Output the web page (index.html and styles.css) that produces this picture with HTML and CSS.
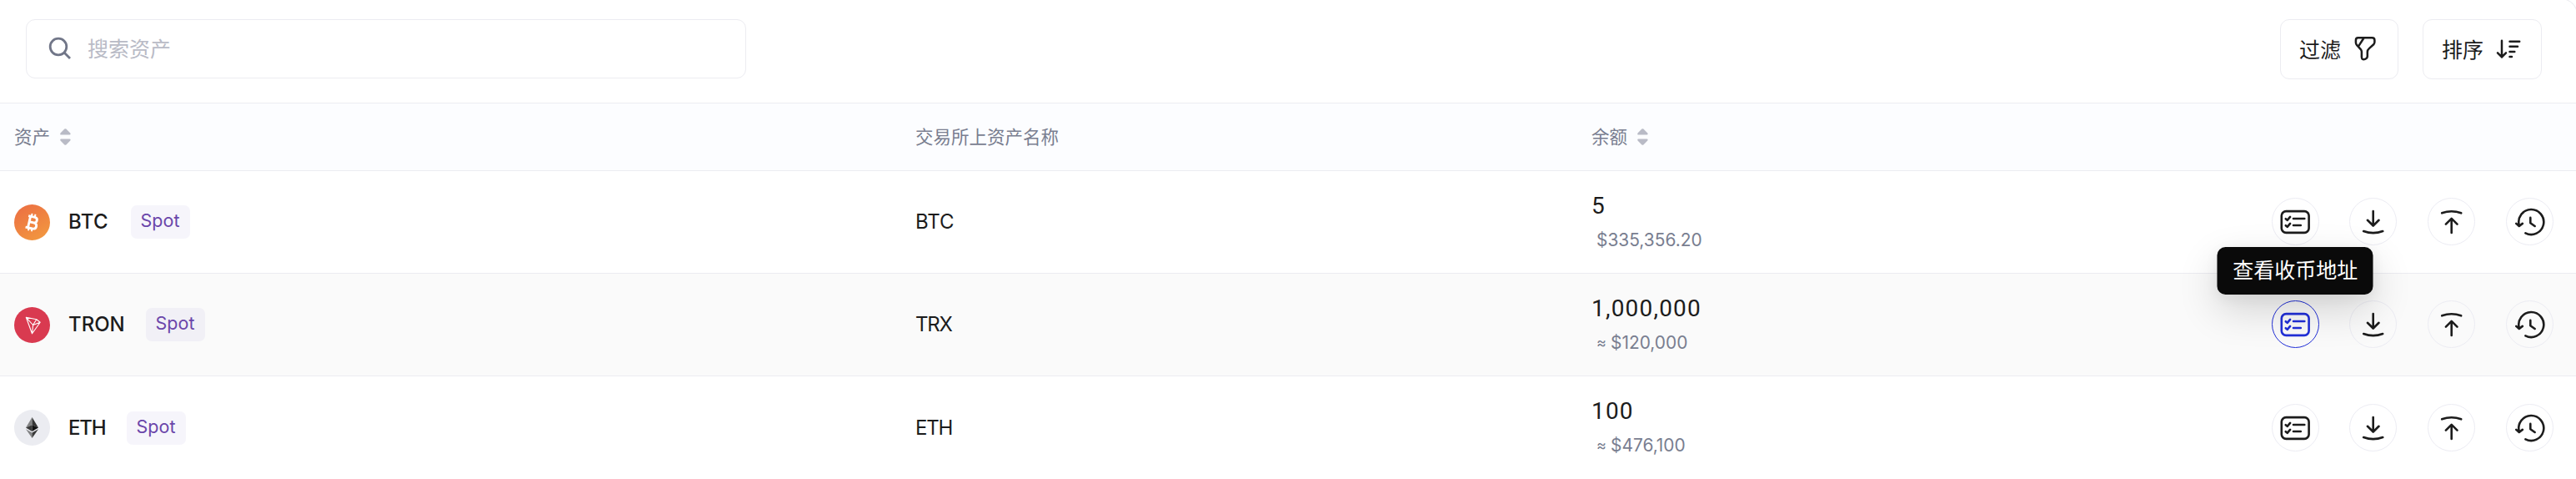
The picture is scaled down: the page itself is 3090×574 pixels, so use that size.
FILE: index.html
```
<!DOCTYPE html>
<html lang="zh-CN">
<head>
<meta charset="utf-8">
<title>资产</title>
<link rel="stylesheet" href="styles.css">
</head>
<body>
<svg class="defs" width="0" height="0" aria-hidden="true">
  <symbol id="i-card" viewBox="0 0 57 57"><rect x="11.8" y="16.1" width="32.8" height="25.8" rx="5.5"/><path d="M16.8 25.2l1.900 1.700 3.400-4M16.8 33.2l1.900 1.700 3.400-4M26 25h13.300M26 33h8.800"/></symbol>
  <symbol id="i-down" viewBox="0 0 57 57"><path d="M28.7 16v17M21.9 26.8l6.8 6.7 6.8-6.7M17.2 40q11.5 4.2 23 0"/></symbol>
  <symbol id="i-up" viewBox="0 0 57 57"><path d="M28.7 42V25M21.9 31.6l6.8-6.7 6.8 6.7M17.2 18.3q11.5-4.2 23 0"/></symbol>
  <symbol id="i-history" viewBox="0 0 57 57"><path d="M15.8 33A15 15 0 1 1 23.4 42.4M12.3 30.9l3.5 3.1 4-3.1M29.3 23.9v6.3l5.3 3.8"/></symbol>
  <symbol id="i-sorter" viewBox="0 0 13 20"><path d="M5.4.6Q6.4-.3 7.4.6L12.3 5.600Q13.200 7.500 11.500 7.500H1.300Q-.3 7.500.5 5.600ZM5.400 19.400Q6.400 20.300 7.400 19.400L12.300 14.400Q13.200 12.500 11.500 12.500H1.300Q-.3 12.500.5 14.400Z"/></symbol>
</svg>
<main class="panel">
  <div class="toolbar">
    <label class="search">
      <svg class="search-icon" viewBox="0 0 32 32"><circle cx="13" cy="13" r="9.800"/><path d="M20.500 20.500l6.500 6.500"/></svg>
      <span>搜索资产</span>
    </label>
    <div class="tools">
      <button class="tool"><span>过滤</span><svg class="tool-icon filter" viewBox="0 0 30 34"><path d="M6.500 3.300H23.500Q26.400 3.300 26.400 6.200V8.200Q26.400 10 25.200 11.300L19.800 16.100Q17.800 17.800 17.800 20.200V25.500Q17.800 27 16.500 28L14.900 28.900Q11.200 30.300 10.900 26.500V20Q10.900 18.500 9.500 16.800L5.200 12.200Q3.900 10.800 3.900 9V6.200Q3.900 3.300 6.500 3.300ZM13.500 3.500L7.600 12.600"/></svg></button>
      <button class="tool"><span>排序</span><svg class="tool-icon" viewBox="0 0 32 34"><path d="M8 6.700V26.500M3 21.400l5 5 5-5M17.500 7.700H29.200M17.500 13.700H27M17.500 19.900H23.300M17.500 26H20"/></svg></button>
    </div>
  </div>
  <div class="table">
    <div class="row head">
      <div class="cell"><span>资产</span><svg class="sorter"><use href="#i-sorter"/></svg></div>
      <div class="cell"><span>交易所上资产名称</span></div>
      <div class="cell"><span>余额</span><svg class="sorter"><use href="#i-sorter"/></svg></div>
    </div>
    <div class="row">
      <div class="cell">
        <svg class="coin" viewBox="0 0 43 43"><defs><linearGradient id="btc" x1=".2" y1="0" x2=".8" y2="1"><stop stop-color="#ec7043"/><stop offset="1" stop-color="#f2983f"/></linearGradient></defs><circle cx="21.500" cy="21.500" r="21.500" fill="url(#btc)"/><g transform="translate(21 21.500) rotate(13)" fill="none" stroke="#fff" stroke-width="2.900"><path d="M-5.500-6.900H2.300Q5.600-6.900 5.600-3.600T2.300-.2H-2.500M2.300-.2Q6.500 0 6.500 3.500T2.500 7.100H-6M-3-6.900V7.100"/><path stroke-width="2" d="M-1.800-10.500V-7M2.200-10.500V-7M-1.800 7V10.500M2.200 7V10.500"/></g></svg>
        <span class="name btc">BTC</span><span class="badge">Spot</span>
      </div>
      <div class="cell symbol">BTC</div>
      <div class="cell balance"><span class="amount">5</span><span class="value">$335,356.20</span></div>
      <div class="actions">
        <button class="act"><svg><use href="#i-card"/></svg></button>
        <button class="act"><svg><use href="#i-down"/></svg></button>
        <button class="act"><svg><use href="#i-up"/></svg></button>
        <button class="act"><svg><use href="#i-history"/></svg></button>
      </div>
    </div>
    <div class="row hovered">
      <div class="cell">
        <svg class="coin" viewBox="0 0 43 43"><circle cx="21.500" cy="21.500" r="21.500" fill="#d93a50"/><path d="M14.300 12.300L26.800 14.800 31.200 18.200 21.500 31.800ZM14.300 12.300L22.600 21.500 21.500 31.800M22.600 21.500L31.200 18.200M22.600 21.500L26.800 14.800" fill="none" stroke="#fff" stroke-width="1.100" stroke-linejoin="round"/></svg>
        <span class="name tron">TRON</span><span class="badge">Spot</span>
      </div>
      <div class="cell symbol tight">TRX</div>
      <div class="cell balance"><span class="amount">1,000,000</span><span class="value"><i class="approx">≈</i>$120,000</span></div>
      <div class="actions">
        <button class="act active"><svg><use href="#i-card"/></svg><span class="tooltip">查看收币地址</span></button>
        <button class="act"><svg><use href="#i-down"/></svg></button>
        <button class="act"><svg><use href="#i-up"/></svg></button>
        <button class="act"><svg><use href="#i-history"/></svg></button>
      </div>
    </div>
    <div class="row">
      <div class="cell">
        <svg class="coin" viewBox="0 0 43 43"><circle cx="21.500" cy="21.500" r="21.500" fill="#ebecf1"/><path d="M21.500 9L14 21.500 21.500 18.200Z" fill="#828384"/><path d="M21.500 9L29 21.500 21.500 18.200Z" fill="#343434"/><path d="M14 21.500L21.500 18.200V26Z" fill="#393939"/><path d="M29 21.500L21.500 18.200V26Z" fill="#111"/><path d="M14 23.200L21.500 27.600V34Z" fill="#828384"/><path d="M29 23.200L21.500 27.600V34Z" fill="#393939"/></svg>
        <span class="name eth">ETH</span><span class="badge">Spot</span>
      </div>
      <div class="cell symbol tight">ETH</div>
      <div class="cell balance"><span class="amount">100</span><span class="value"><i class="approx">≈</i>$476,100</span></div>
      <div class="actions">
        <button class="act"><svg><use href="#i-card"/></svg></button>
        <button class="act"><svg><use href="#i-down"/></svg></button>
        <button class="act"><svg><use href="#i-up"/></svg></button>
        <button class="act"><svg><use href="#i-history"/></svg></button>
      </div>
    </div>
  </div>
</main>
</body>
</html>
```
FILE: styles.css
```
* { box-sizing: border-box; }
body { margin: 0; background: #fff; color: #1c1c1c; font-family: Inter, "Noto Sans CJK SC", sans-serif; }
button { margin: 0; padding: 0; background: none; font: inherit; color: inherit; }
svg { display: block; flex: none; }
.defs { position: absolute; }

.panel { position: relative; width: 3090px; height: 574px; overflow: hidden; }
.panel::after { content: ""; position: absolute; top: -2px; right: -2px; width: 20px; height: 20px; border: solid #ececf1; border-width: 1px 1px 0 0; border-top-right-radius: 20px; }

.toolbar { display: flex; justify-content: space-between; align-items: flex-start; height: 123px; padding: 23px 41px 0 31px; font-family: "Noto Sans CJK SC", sans-serif; font-size: 25px; line-height: 36px; }
.toolbar span { padding-bottom: 3px; }
.search { display: flex; align-items: center; width: 864px; height: 71px; padding: 0 25px; border: 1px solid #ececf1; border-radius: 11px; color: #b9bbc6; gap: 16px; }
.search-icon { width: 32px; height: 32px; fill: none; stroke: #717688; stroke-width: 2.8; }
.tools { display: flex; gap: 29px; }
.tool { display: flex; align-items: center; justify-content: space-between; width: 142px; height: 72px; padding: 0 24px 0 22px; border: 1px solid #ececf1; border-radius: 11px; }
.tool:last-child { width: 143px; padding-right: 23px; }
.tool-icon { width: 32px; height: 34px; fill: none; stroke: #1c1c1c; stroke-width: 2.5; stroke-linecap: round; stroke-linejoin: round; }
.tool-icon.filter { width: 30px; }

.row { display: grid; grid-template-columns: 1081px 811px 700px 1fr; height: 123px; border-bottom: 1px solid #ececf1; }
.row:last-child { border-bottom: 0; }
.head { height: 82px; border-top: 1px solid #ececf1; background: #fcfdff; color: #797e90; font-family: "Noto Sans CJK SC", sans-serif; font-size: 21.5px; }
.head span { padding-bottom: 3px; }
.hovered { background: #fafafa; }
.cell { display: flex; align-items: center; padding-left: 17px; }
.sorter { width: 13px; height: 20px; margin-left: 12px; fill: #b9bbc6; }
.coin { width: 43px; height: 43px; }
.name { margin-left: 22px; padding-bottom: 1px; font-size: 24px; font-weight: 500; white-space: nowrap; }
.name.btc { width: 75px; letter-spacing: .3px; }
.name.tron { width: 93px; }
.name.eth { width: 70px; letter-spacing: -1.2px; }
.badge { width: 71px; height: 40px; padding-right: 1px; border-radius: 7px; background: rgba(99, 80, 180, .055); color: #6b46aa; font-size: 21.5px; line-height: 37px; text-align: center; }
.symbol { padding-bottom: 1px; font-size: 24px; }
.symbol.tight { letter-spacing: -1.2px; }
.balance { flex-direction: column; align-items: flex-start; padding-top: 26px; }
.amount { font-family: Roboto, sans-serif; font-size: 28px; line-height: 32px; letter-spacing: 1.2px; }
.value { display: flex; align-items: center; padding-left: 6px; margin-top: 12px; color: #797e90; font-size: 20.9px; line-height: 26px; }
.approx { width: 17px; font-size: 18px; font-style: normal; }

.actions { display: flex; align-items: center; justify-content: flex-end; gap: 36.6px; padding: 0 27.5px 1px 0; }
.act { position: relative; width: 57px; height: 57px; border: 1px solid #ececf3; border-radius: 50%; color: #1c1c1c; }
.act > svg { width: 57px; height: 57px; margin: -1px; fill: none; stroke: currentColor; stroke-width: 2.6; stroke-linecap: round; stroke-linejoin: round; }
.act.active { border-color: #212fd8; color: #212fd8; }
.tooltip { position: absolute; bottom: 63px; left: 50%; z-index: 1; width: 187px; height: 57px; transform: translateX(-50%); border-radius: 10px; background: #0a0a0a; box-shadow: 0 18px 48px rgba(0, 0, 0, .16), 0 4px 16px rgba(0, 0, 0, .06); color: #fff; font-family: "Noto Sans CJK SC", sans-serif; font-size: 25px; line-height: 52px; white-space: nowrap; }
```
